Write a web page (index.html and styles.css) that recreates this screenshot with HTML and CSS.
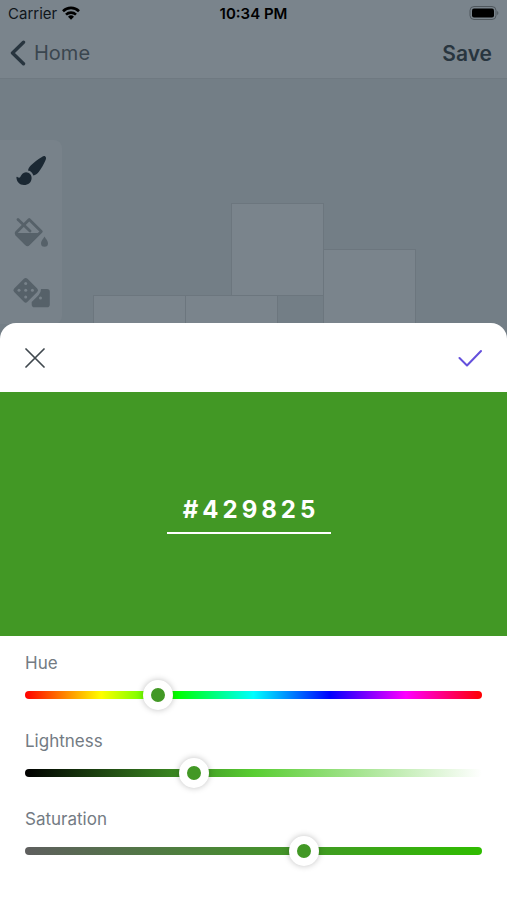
FILE: index.html
```
<!DOCTYPE html>
<html lang="en">
<head>
  <meta charset="utf-8">
  <meta name="viewport" content="width=device-width, initial-scale=1">
  <title>Color Picker</title>
  <link rel="stylesheet" href="styles.css">
</head>
<body>
  <div class="screen">
    <div class="status-bar">
      <div class="carrier">
        <span>Carrier</span>
        <svg width="18" height="14" viewBox="0 0 18 14" fill="none" stroke="#000" stroke-width="2.6">
          <path d="M1 5.2a11.4 11.4 0 0 1 16 0"/>
          <path d="M4 8.6a7.2 7.2 0 0 1 10 0"/>
          <path d="M9 13.8 6 10.7a4.3 4.3 0 0 1 6 0z" fill="#000" stroke="none"/>
        </svg>
      </div>
      <span class="time">10:34 PM</span>
      <div class="battery">
        <svg width="30" height="14" viewBox="0 0 30 14">
          <rect x="1" y="0.5" width="26" height="13" rx="4" fill="none" stroke="#4f575d"/>
          <rect x="3" y="2.5" width="22" height="9" rx="2" fill="#000"/>
          <path d="M28.2 5a2.3 2.3 0 0 1 0 4z" fill="#4f575d"/>
        </svg>
      </div>
    </div>

    <header class="nav">
      <a href="#" class="back">
        <svg width="16" height="26" viewBox="0 0 16 26" fill="none" stroke="#28353f" stroke-width="3.4" stroke-linecap="round" stroke-linejoin="round">
          <path d="M13.5 2.3 2.5 13l11 10.7"/>
        </svg>
        <span>Home</span>
      </a>
      <button class="save" type="button">Save</button>
    </header>

    <main class="canvas">
      <div class="tools">
        <button class="tool" type="button" aria-label="Brush">
          <svg width="32" height="32" viewBox="0 0 32 32" fill="#1b2833">
            <path d="M30.3 1.5c1 .9.9 2.2.3 3.6-1.6 4-4.3 8.4-6.9 12-1.4 1.8-3.200 3-5.300 3.500-.8-2.700-2.600-4.500-5.400-5 .4-2 1.300-3.800 3-5.300 3.300-3 7.100-6.100 10.900-8.300 1.300-.8 2.500-1.300 3.400-.5z"/>
            <path d="M11 17.300c3.300.2 5.600 2.500 5.600 5.600 0 4.400-3.500 7.100-7.600 7.100-4.600 0-7.300-3-7.600-7.700 0-.6.6-.7 1-.4 1 .8 1.900 1.200 2.700.4 1.200-2.500 3-5 5.900-5z"/>
          </svg>
        </button>
        <button class="tool" type="button" aria-label="Fill">
          <svg width="36" height="32" viewBox="0 0 36 32" fill="#566169">
            <path d="M16.200 3.500 28.300 15.500 15.500 28.300Q14.400 29.300 13.300 28.300L3.500 18.500Q2.500 17.300 3.500 16.200z" fill="none" stroke="#566169" stroke-width="2.800" stroke-linejoin="round"/>
            <path d="M3 17h24.500L16 29q-1.600 1.300-3.200 0L3 19z"/>
            <path d="M5 3.500 17 15" fill="none" stroke="#566169" stroke-width="2.800" stroke-linecap="round"/>
            <path d="M31.500 20.500c1.600 2.600 3.500 4.800 3.500 6.700a3.500 3.500 0 0 1-7 0c0-1.900 1.900-4.100 3.500-6.700z"/>
          </svg>
        </button>
        <button class="tool" type="button" aria-label="Random">
          <svg width="38" height="32" viewBox="0 0 38 32">
            <path d="M15.500 1.800 25.200 11.500q1.800 1.800 0 3.600L15.500 24.800q-1.800 1.800-3.600 0L2.200 15.100q-1.800-1.800 0-3.600L11.900 1.800q1.800-1.800 3.600 0z" fill="#566169"/>
            <path d="M29 12h6q2.800 0 2.800 2.800v12.600q0 2.800-2.800 2.800H22.500q-2.800 0-2.800-2.800V25l6.800-6.700q2.600-3 2.500-6.300z" fill="#566169"/>
            <g fill="#78828a">
              <circle cx="13.700" cy="6.500" r="1.500"/>
              <circle cx="7" cy="13.300" r="1.500"/>
              <circle cx="13.700" cy="13.300" r="1.500"/>
              <circle cx="20.400" cy="13.300" r="1.500"/>
              <circle cx="13.700" cy="20" r="1.500"/>
              <circle cx="28.500" cy="21" r="1.500"/>
            </g>
          </svg>
        </button>
      </div>

      <div class="tiles">
        <div class="tile tile-top"></div>
        <div class="tile tile-right"></div>
        <div class="tile tile-left"></div>
        <div class="tile tile-middle"></div>
      </div>
    </main>

    <section class="sheet">
      <div class="sheet-bar">
        <button class="icon-button" type="button" aria-label="Close">
          <svg width="20" height="20" viewBox="0 0 20 20" fill="none" stroke="#40484e" stroke-width="1.700" stroke-linecap="round">
            <path d="M1 1l18 18M19 1 1 19"/>
          </svg>
        </button>
        <button class="icon-button" type="button" aria-label="Apply">
          <svg width="24" height="18" viewBox="0 0 24 18" fill="none" stroke="#6450dc" stroke-width="2" stroke-linecap="round" stroke-linejoin="round">
            <path d="M1.500 9 9 16.500 23 2"/>
          </svg>
        </button>
      </div>

      <div class="preview">
        <input class="hex" type="text" value="#429825" maxlength="7" aria-label="Hex color">
      </div>

      <div class="sliders">
        <div class="slider">
          <label for="hue">Hue</label>
          <div class="track track-hue">
            <input type="range" id="hue" min="0" max="360" value="105">
          </div>
        </div>
        <div class="slider">
          <label for="lightness">Lightness</label>
          <div class="track track-lightness">
            <input type="range" id="lightness" min="0" max="100" value="37">
          </div>
        </div>
        <div class="slider">
          <label for="saturation">Saturation</label>
          <div class="track track-saturation">
            <input type="range" id="saturation" min="0" max="100" value="61">
          </div>
        </div>
      </div>
    </section>
  </div>
</body>
</html>
```
FILE: styles.css
```
* {
  box-sizing: border-box;
}

body {
  margin: 0;
  font-family: Inter, "Liberation Sans", sans-serif;
  background-color: #737e86;
}

button {
  border: none;
  padding: 0;
  background: none;
  font-family: inherit;
  cursor: pointer;
}

svg {
  display: block;
}

.screen {
  position: relative;
  min-height: 100vh;
  display: flex;
  flex-direction: column;
  overflow: hidden;
}

/* Status bar and navigation */
.status-bar {
  display: grid;
  grid-template-columns: 1fr auto 1fr;
  align-items: center;
  height: 28px;
  padding: 0 8px 2px;
  background-color: #7a848c;
  color: #10161b;
  font-size: 15px;
}

.carrier {
  display: flex;
  align-items: center;
  gap: 5px;
}

.time {
  font-weight: 600;
  color: #000;
}

.battery {
  justify-self: end;
}

.nav {
  display: flex;
  justify-content: space-between;
  align-items: center;
  height: 51px;
  padding: 0 15px 0 10px;
  background-color: #7a848c;
  border-bottom: 1px solid #6f7981;
}

.back {
  display: flex;
  align-items: center;
  gap: 8px;
  color: #3a464f;
  font-size: 20px;
  text-decoration: none;
}

.save {
  color: #28353f;
  font-size: 21px;
  font-weight: 600;
}

/* Drawing area */
.canvas {
  position: relative;
  flex: 1;
  padding-top: 124px;
}

.tools {
  position: absolute;
  top: 61px;
  left: 0;
  width: 62px;
  padding: 15px 0;
  display: flex;
  flex-direction: column;
  align-items: center;
  gap: 29px;
  background-color: #78828a;
  border-radius: 0 8px 8px 0;
}

.tiles {
  display: grid;
  grid-template-columns: repeat(7, 46px);
  grid-auto-rows: 46px;
  justify-content: center;
}

/* The extra pixel lets neighbours share one border */
.tile {
  margin: 0 -1px -1px 0;
  background-color: #7a848c;
  border: 1px solid #6c767e;
}

.tile-top {
  grid-area: 1 / 4 / span 2 / span 2;
}

.tile-right {
  grid-area: 2 / 6 / span 2 / span 2;
}

.tile-left {
  grid-area: 3 / 1 / span 2 / span 2;
}

.tile-middle {
  grid-area: 3 / 3 / span 2 / span 2;
}

/* Color sheet */
.sheet {
  position: absolute;
  left: 0;
  right: 0;
  bottom: 0;
  background-color: #fff;
  border-radius: 16px 16px 0 0;
}

.sheet-bar {
  display: flex;
  justify-content: space-between;
  align-items: center;
  height: 69px;
  padding: 0 25px;
}

.preview {
  display: flex;
  justify-content: center;
  align-items: center;
  height: 244px;
  padding: 0 10px 8px 0;
  background-color: #429825;
}

.hex {
  width: 164px;
  height: 48px;
  padding: 0 0 0 5px;
  border: none;
  border-bottom: 2px solid #fff;
  background: none;
  color: #fff;
  font-family: inherit;
  font-size: 24px;
  font-weight: 700;
  letter-spacing: 4px;
  text-align: center;
  outline: none;
}

.sliders {
  display: flex;
  flex-direction: column;
  gap: 32px;
  padding: 17px 25px 45px;
}

.slider {
  display: flex;
  flex-direction: column;
  gap: 18px;
}

.slider label {
  color: #737b83;
  font-size: 17px;
  line-height: 20px;
}

.track {
  display: flex;
  align-items: center;
  height: 8px;
  border-radius: 4px;
}

.track-hue {
  background: linear-gradient(to right, #f00, #ff0, #0f0, #0ff, #00f, #f0f, #f00);
}

.track-lightness {
  background: linear-gradient(to right, #000, hsl(105, 61%, 50%), #fff);
}

.track-saturation {
  background: linear-gradient(to right, hsl(105, 0%, 37%), hsl(105, 100%, 37%));
}

/* Runs past both track ends so the thumb centre reaches them */
.track input {
  flex: 1;
  min-width: 0;
  height: 30px;
  margin: 0 -15px;
  appearance: none;
  background: none;
  cursor: pointer;
}

.track input::-webkit-slider-thumb {
  appearance: none;
  width: 30px;
  height: 30px;
  border: 8px solid #fff;
  border-radius: 50%;
  background-color: #429825;
  box-shadow: 0 0 6px rgba(0, 0, 0, 0.25);
}
```
